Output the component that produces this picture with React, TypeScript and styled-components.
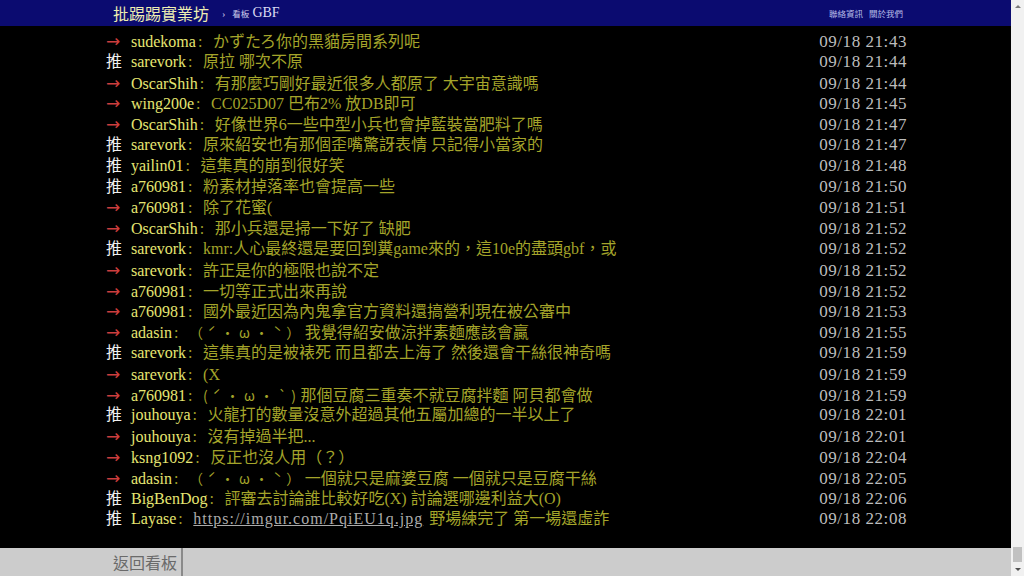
import React from "react";
import styled, { createGlobalStyle } from "styled-components";

const GlobalStyle = createGlobalStyle`
  html, body {
    margin: 0;
    padding: 0;
    height: 100%;
    overflow: hidden;
    background: #000;
  }
  #root { height: 100%; }
`;

const SERIF = `"Liberation Serif", "Noto Sans CJK TC", serif`;
const CJK = `"Noto Sans CJK TC", "Liberation Serif", sans-serif`;

const Frame = styled.div`
  display: flex;
  width: 1024px;
  height: 576px;
`;

const Page = styled.div`
  flex: 1;
  min-width: 0;
  display: flex;
  flex-direction: column;
  background: #000;
`;

const TopBar = styled.header`
  flex-shrink: 0;
  height: 26px;
  background: #0b0b70;
`;

const Container = styled.div`
  width: 811px;
  height: 100%;
  margin: 0 auto;
  box-sizing: border-box;
  display: flex;
  align-items: center;
`;

const TopInner = styled(Container)`
  padding: 0 8px 0 13px;
`;

const Logo = styled.a`
  font-family: ${CJK};
  font-size: 16px;
  line-height: 26px;
  color: #eeeeb2;
  text-decoration: none;
`;

const Caret = styled.span`
  margin: 0 7px 0 13px;
  font-family: ${SERIF};
  font-size: 10px;
  color: #c8c8e8;
`;

const BoardLabel = styled.span`
  font-family: ${CJK};
  font-size: 8.5px;
  color: #d0d0ec;
  margin-right: 3px;
`;

const BoardName = styled.a`
  font-family: ${SERIF};
  font-size: 14px;
  color: #dcdcf4;
  text-decoration: none;
`;

const TopLinks = styled.nav`
  margin-left: auto;
  display: flex;
  gap: 6px;
`;

const TopLink = styled.a`
  font-family: ${CJK};
  font-size: 8.5px;
  color: #b8bce8;
  text-decoration: none;
`;

const Main = styled.main`
  flex: 1;
  padding-top: 5px;
`;

const Screen = styled.div`
  width: 811px;
  margin: 0 auto;
`;

const Push = styled.div`
  display: flex;
  align-items: baseline;
  height: 20.8px;
  line-height: 20.8px;
  padding: 0 4px 0 6px;
  white-space: nowrap;
  font-family: ${SERIF};
  font-size: 16px;
`;

const Tag = styled.span<{ $push: boolean }>`
  flex-shrink: 0;
  width: 25px;
  font-family: "DejaVu Sans", "Noto Sans CJK TC", sans-serif;
  font-size: ${(p) => (p.$push ? "16px" : "17px")};
  color: ${(p) => (p.$push ? "#f0f0f0" : "#cc3e3e")};
`;

const Uid = styled.span`
  color: #e6e672;
`;

const Sep = styled.span`
  display: inline-block;
  width: 15px;
  padding-left: 2px;
  color: #a4a42a;
`;

const Content = styled.span`
  flex: 1;
  min-width: 0;
  color: #a4a42a;
`;

const Kaomoji = styled.span`
  font-family: "Noto Sans CJK JP", "Noto Sans CJK TC", sans-serif;
  font-size: 14px;
  line-height: 1;
  letter-spacing: 4.6px;
`;

const Link = styled.a`
  color: #ababab;
  text-decoration: underline;
  letter-spacing: 1px;
  margin-right: 6px;
`;

const Time = styled.span`
  flex-shrink: 0;
  font-size: 17px;
  letter-spacing: 0.55px;
  color: #bdbdbd;
`;

const NavBar = styled.footer`
  flex-shrink: 0;
  height: 28px;
  background: #cccccc;
`;

const BackButton = styled.a`
  height: 100%;
  display: flex;
  align-items: center;
  padding: 0 4px 0 13px;
  border-right: 2px solid #8a8a8a;
  font-family: ${CJK};
  font-size: 16px;
  color: #6a6a6a;
  text-decoration: none;
`;

const ScrollBar = styled.div`
  width: 13px;
  flex-shrink: 0;
  background: #f1f1f1;
  display: flex;
  flex-direction: column;
`;

const ScrollButton = styled.div<{ $down?: boolean }>`
  height: 13px;
  display: flex;
  align-items: center;
  justify-content: center;
  &::before {
    content: "";
    width: 0;
    height: 0;
    border-left: 3.5px solid transparent;
    border-right: 3.5px solid transparent;
    ${(p) =>
      p.$down
        ? "border-top: 3.5px solid #505050;"
        : "border-bottom: 3.5px solid #7a7a7a;"}
  }
`;

const Track = styled.div`
  flex: 1;
  display: flex;
  flex-direction: column;
  justify-content: flex-end;
  align-items: center;
`;

const Thumb = styled.div`
  width: 9px;
  height: 15px;
  margin-bottom: 1px;
  background: #c1c1c1;
`;

type Row = {
  push: boolean;
  user: string;
  text: string;
  time: string;
  link?: string;
  kao?: string;
};

const rows: Row[] = [
  { push: false, user: "sudekoma", text: "かずたろ你的黑貓房間系列呢", time: "09/18 21:43" },
  { push: true, user: "sarevork", text: "原拉 哪次不原", time: "09/18 21:44" },
  { push: false, user: "OscarShih", text: "有那麼巧剛好最近很多人都原了 大宇宙意識嗎", time: "09/18 21:44" },
  { push: false, user: "wing200e", text: "CC025D07 巴布2% 放DB即可", time: "09/18 21:45" },
  { push: false, user: "OscarShih", text: "好像世界6一些中型小兵也會掉藍裝當肥料了嗎", time: "09/18 21:47" },
  { push: true, user: "sarevork", text: "原來紹安也有那個歪嘴驚訝表情 只記得小當家的", time: "09/18 21:47" },
  { push: true, user: "yailin01", text: "這集真的崩到很好笑", time: "09/18 21:48" },
  { push: true, user: "a760981", text: "粉素材掉落率也會提高一些", time: "09/18 21:50" },
  { push: false, user: "a760981", text: "除了花蜜(", time: "09/18 21:51" },
  { push: false, user: "OscarShih", text: "那小兵還是掃一下好了 缺肥", time: "09/18 21:52" },
  { push: true, user: "sarevork", text: "kmr:人心最終還是要回到糞game來的，這10e的盡頭gbf，或", time: "09/18 21:52" },
  { push: false, user: "sarevork", text: "許正是你的極限也說不定", time: "09/18 21:52" },
  { push: false, user: "a760981", text: "一切等正式出來再說", time: "09/18 21:52" },
  { push: false, user: "a760981", text: "國外最近因為內鬼拿官方資料還搞營利現在被公審中", time: "09/18 21:53" },
  { push: false, user: "adasin", kao: "（ˊ・ω・ˋ）", text: "我覺得紹安做涼拌素麵應該會贏", time: "09/18 21:55" },
  { push: true, user: "sarevork", text: "這集真的是被裱死 而且都去上海了 然後還會干絲很神奇嗎", time: "09/18 21:59" },
  { push: false, user: "sarevork", text: "(X", time: "09/18 21:59" },
  { push: false, user: "a760981", kao: "(ˊ・ω・`)", text: "那個豆腐三重奏不就豆腐拌麵 阿貝都會做", time: "09/18 21:59" },
  { push: true, user: "jouhouya", text: "火龍打的數量沒意外超過其他五屬加總的一半以上了", time: "09/18 22:01" },
  { push: false, user: "jouhouya", text: "沒有掉過半把...", time: "09/18 22:01" },
  { push: false, user: "ksng1092", text: "反正也沒人用（？）", time: "09/18 22:04" },
  { push: false, user: "adasin", kao: "（ˊ・ω・ˋ）", text: "一個就只是麻婆豆腐 一個就只是豆腐干絲", time: "09/18 22:05" },
  { push: true, user: "BigBenDog", text: "評審去討論誰比較好吃(X) 討論選哪邊利益大(O)", time: "09/18 22:06" },
  {
    push: true,
    user: "Layase",
    link: "https://imgur.com/PqiEU1q.jpg",
    text: "野場練完了 第一場還虛詐",
    time: "09/18 22:08",
  },
];

export default function App() {
  return (
    <>
      <GlobalStyle />
      <Frame>
        <Page>
          <TopBar>
            <TopInner>
              <Logo href="#">批踢踢實業坊</Logo>
              <Caret>›</Caret>
              <BoardLabel>看板</BoardLabel>
              <BoardName href="#">GBF</BoardName>
              <TopLinks>
                <TopLink href="#">聯絡資訊</TopLink>
                <TopLink href="#">關於我們</TopLink>
              </TopLinks>
            </TopInner>
          </TopBar>
          <Main>
            <Screen>
              {rows.map((r, i) => (
                <Push key={i}>
                  <Tag $push={r.push}>{r.push ? "推" : "→"}</Tag>
                  <Uid>{r.user}</Uid>
                  <Sep>:</Sep>
                  <Content>
                    {r.link && <Link href="#">{r.link}</Link>}
                    {r.kao && <Kaomoji>{r.kao}</Kaomoji>}
                    {r.text}
                  </Content>
                  <Time>{r.time}</Time>
                </Push>
              ))}
            </Screen>
          </Main>
          <NavBar>
            <Container>
              <BackButton href="#">返回看板</BackButton>
            </Container>
          </NavBar>
        </Page>
        <ScrollBar>
          <ScrollButton />
          <Track>
            <Thumb />
          </Track>
          <ScrollButton $down />
        </ScrollBar>
      </Frame>
    </>
  );
}
